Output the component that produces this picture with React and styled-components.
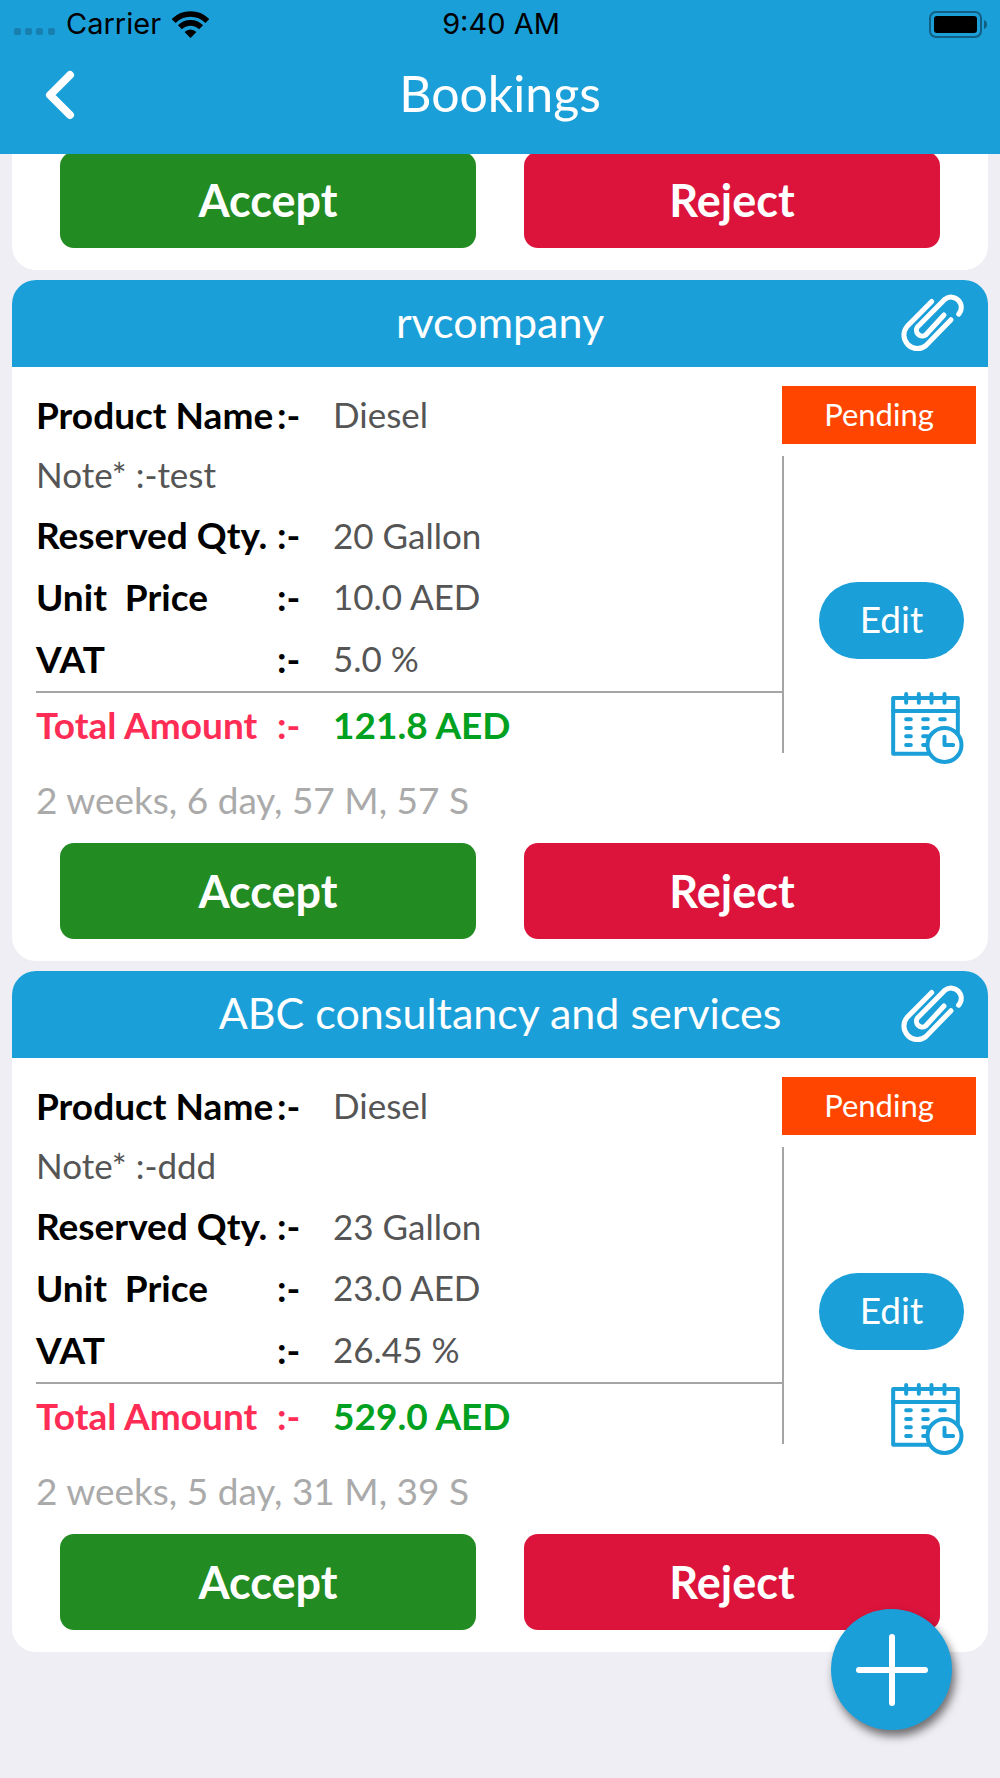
import React from "react";
import styled, { createGlobalStyle } from "styled-components";

const GlobalStyle = createGlobalStyle`
  * {
    box-sizing: border-box;
  }
  body {
    margin: 0;
    background-color: #efeef4;
    font-family: Lato, "Liberation Sans", sans-serif;
  }
  button {
    border: 0;
    padding: 0;
    background: none;
    color: white;
    font-family: inherit;
    cursor: pointer;
  }
`;

const Page = styled.div`
  min-height: 100vh;
`;

const Header = styled.header`
  position: sticky;
  top: 0;
  z-index: 1;
  background-color: #1b9fd9;
`;

const StatusBar = styled.div`
  display: grid;
  grid-template-columns: 1fr auto 1fr;
  align-items: center;
  height: 48px;
  padding: 0 12px 0 14px;
  font-family: Inter, sans-serif;
  font-size: 29px;
  line-height: 48px;
  color: black;
`;

const Carrier = styled.div`
  display: flex;
  align-items: center;
  gap: 11px;
`;

const SignalDots = styled.svg`
  margin-top: 16px;
`;

const Battery = styled.svg`
  justify-self: end;
`;

const NavBar = styled.div`
  display: grid;
  grid-template-columns: 1fr auto 1fr;
  align-items: center;
  height: 106px;
  padding: 0 45px 12px;
`;

const BackButton = styled.button`
  justify-self: start;
  display: flex;
`;

const Title = styled.h1`
  margin: 0;
  padding-bottom: 4px;
  font-size: 50px;
  font-weight: 400;
  color: white;
`;

const List = styled.main`
  display: flex;
  flex-direction: column;
  gap: 10px;
  padding: 0 12px 126px;
  margin-top: -2px;
`;

const Card = styled.article`
  background-color: white;
  border-radius: ${(props) => (props.$continued ? "0 0 24px 24px" : "24px")};
  overflow: hidden;
`;

const CardHeader = styled.div`
  display: grid;
  grid-template-columns: 64px 1fr 64px;
  align-items: center;
  height: 87px;
  padding: 0 24px;
  background-color: #1b9fd9;
`;

const CompanyName = styled.h2`
  grid-column: 2;
  margin: 0;
  padding-bottom: 4px;
  font-size: 43px;
  font-weight: 400;
  text-align: center;
  color: white;
`;

const IconButton = styled.button`
  display: flex;
  justify-content: flex-end;
`;

const CardBody = styled.div`
  display: grid;
  grid-template-columns: 1fr 194px;
  padding: 19px 12px 0 24px;
`;

const Details = styled.dl`
  margin: 0;
`;

const Row = styled.div`
  display: grid;
  grid-template-columns: ${(props) => (props.$note ? "auto 1fr" : "241px 56px 1fr")};
  align-items: center;
  height: ${(props) => props.$height || 62}px;
  padding-bottom: 4px;
  font-size: ${(props) => (props.$note ? 35 : 37)}px;
  color: ${(props) => (props.$note ? "#555555" : "black")};
`;

const TotalRow = styled(Row)`
  height: 69px;
  border-top: 2px solid #a5a5a5;
  color: #ff2d55;
`;

const Label = styled.dt`
  font-weight: ${(props) => (props.$light ? 400 : 700)};
  white-space: pre;
`;

const Separator = styled.span`
  font-weight: 700;
`;

const Value = styled.dd`
  margin: 0;
  font-size: 35px;
  color: #555555;
`;

const TotalValue = styled.dd`
  margin: 0;
  font-size: 37px;
  font-weight: 700;
  color: #00a020;
`;

const Side = styled.div`
  display: flex;
  flex-direction: column;
  gap: 12px;
`;

const Badge = styled.div`
  height: 58px;
  background-color: #ff4500;
  font-size: 31px;
  line-height: 56px;
  text-align: center;
  color: white;
`;

const Tools = styled.div`
  display: flex;
  flex-direction: column;
  align-items: flex-end;
  gap: 33px;
  height: 297px;
  padding: 126px 12px 0 0;
  border-left: 2px solid #a5a5a5;
`;

const EditButton = styled.button`
  flex-shrink: 0;
  width: 145px;
  height: 77px;
  padding-bottom: 4px;
  border-radius: 39px;
  background-color: #1b9fd9;
  font-size: 37px;
`;

const Remaining = styled.p`
  margin: 0;
  padding: 0 0 3px 24px;
  font-size: 37px;
  line-height: 80px;
  color: #aaaaaa;
`;

const Actions = styled.div`
  display: grid;
  grid-template-columns: 1fr 1fr;
  gap: 48px;
  padding: 0 48px 22px;
`;

const ActionButton = styled.button`
  height: 96px;
  border-radius: 14px;
  background-color: ${(props) => props.$color};
  font-size: 45px;
  font-weight: 700;
`;

const AddButton = styled.button`
  position: fixed;
  right: 48px;
  bottom: 48px;
  z-index: 2;
  display: flex;
  align-items: center;
  justify-content: center;
  width: 121px;
  height: 121px;
  border-radius: 50%;
  background-color: #1b9fd9;
  box-shadow: 3px 6px 10px rgba(0, 0, 0, 0.55);
`;

const Wifi = () => (
  <svg width="37" height="27" viewBox="0 0 112 81" fill="none" stroke="black" strokeWidth="17">
    <path d="M5 30A72 72 0 0 1 107 30" />
    <path d="M24 49A45 45 0 0 1 88 49" />
    <path d="M56 81L38 63A25 25 0 0 1 74 63Z" fill="black" stroke="none" />
  </svg>
);

const Paperclip = () => (
  <svg width="64" height="60" viewBox="0 0 64 60" fill="none" stroke="white" strokeWidth="5" strokeLinecap="round">
    <path d="M58.6 20.2A10.2 10.2 0 0 0 44.9 5.2L17.6 32.8A5.8 5.8 0 0 0 25.6 41L44 21" />
    <path d="M31.7 7.5L7 32.5A13.5 13.5 0 0 0 26 51.5L51 25.7" />
  </svg>
);

const CalendarClock = () => (
  <svg width="73" height="72" viewBox="0 0 218 216" fill="none" stroke="#1b9fd9" strokeWidth="12" strokeLinecap="round">
    <rect x="6" y="18" width="194" height="167" strokeLinejoin="round" />
    <path d="M6 57H200M45 6V32M83 6V32M121 6V32M160 6V32" />
    <path d="M45 82H59M96 82H110M147 82H161M45 108H59M96 108H110M45 133H59M96 133H110M45 159H59M96 159H110" />
    <circle cx="160" cy="159" r="51" fill="white" />
    <path d="M160 134V159H186" strokeLinejoin="round" />
  </svg>
);

const bookings = [
  {
    company: "rvcompany",
    product: "Diesel",
    note: "test",
    quantity: "20 Gallon",
    price: "10.0 AED",
    vat: "5.0 %",
    total: "121.8 AED",
    remaining: "2 weeks, 6 day, 57 M, 57 S",
  },
  {
    company: "ABC consultancy and services",
    product: "Diesel",
    note: "ddd",
    quantity: "23 Gallon",
    price: "23.0 AED",
    vat: "26.45 %",
    total: "529.0 AED",
    remaining: "2 weeks, 5 day, 31 M, 39 S",
  },
];

const DetailRow = ({ label, value, height }) => (
  <Row $height={height}>
    <Label>{label}</Label>
    <Separator>:-</Separator>
    <Value>{value}</Value>
  </Row>
);

const BookingActions = () => (
  <Actions>
    <ActionButton $color="#228b22">Accept</ActionButton>
    <ActionButton $color="#dc143c">Reject</ActionButton>
  </Actions>
);

const BookingCard = ({ booking }) => (
  <Card>
    <CardHeader>
      <CompanyName>{booking.company}</CompanyName>
      <IconButton aria-label="Attachments">
        <Paperclip />
      </IconButton>
    </CardHeader>
    <CardBody>
      <Details>
        <DetailRow label="Product Name" value={booking.product} height={60} />
        <Row $note $height={60}>
          <Label $light>Note* :-</Label>
          <Value>{booking.note}</Value>
        </Row>
        <DetailRow label="Reserved Qty." value={booking.quantity} height={61} />
        <DetailRow label="Unit  Price" value={booking.price} />
        <DetailRow label="VAT" value={booking.vat} />
        <TotalRow>
          <Label>Total Amount</Label>
          <Separator>:-</Separator>
          <TotalValue>{booking.total}</TotalValue>
        </TotalRow>
      </Details>
      <Side>
        <Badge>Pending</Badge>
        <Tools>
          <EditButton>Edit</EditButton>
          <IconButton aria-label="Schedule">
            <CalendarClock />
          </IconButton>
        </Tools>
      </Side>
    </CardBody>
    <Remaining>{booking.remaining}</Remaining>
    <BookingActions />
  </Card>
);

const App = () => {
  return (
    <Page>
      <GlobalStyle />
      <Header>
        <StatusBar>
          <Carrier>
            <SignalDots width="41" height="8" viewBox="0 0 41 8" fill="#1780b0">
              <rect width="7" height="7" rx="2" />
              <rect x="11" width="7" height="7" rx="2" />
              <rect x="22" width="7" height="7" rx="2" />
              <rect x="34" width="7" height="7" rx="2" />
            </SignalDots>
            <span>Carrier</span>
            <Wifi />
          </Carrier>
          <span>9:40 AM</span>
          <Battery width="59" height="27" viewBox="0 0 59 27">
            <rect x="1" y="1" width="51" height="25" rx="6" fill="none" stroke="#115f83" strokeWidth="2" />
            <rect x="5" y="5" width="43" height="17" rx="3" />
            <path d="M55 9Q58 10 58 13.5T55 18Z" fill="#115f83" />
          </Battery>
        </StatusBar>
        <NavBar>
          <BackButton aria-label="Back">
            <svg width="30" height="50" viewBox="0 0 30 50" fill="none" stroke="white" strokeWidth="8" strokeLinecap="round" strokeLinejoin="round">
              <path d="M25 5L5 25L25 45" />
            </svg>
          </BackButton>
          <Title>Bookings</Title>
        </NavBar>
      </Header>
      <List>
        <Card $continued>
          <BookingActions />
        </Card>
        {bookings.map((booking) => (
          <BookingCard key={booking.company} booking={booking} />
        ))}
      </List>
      <AddButton aria-label="Add booking">
        <svg width="74" height="74" viewBox="0 0 74 74" stroke="white" strokeWidth="6" strokeLinecap="round">
          <path d="M37 4V70M4 37H70" />
        </svg>
      </AddButton>
    </Page>
  );
};

export default App;
